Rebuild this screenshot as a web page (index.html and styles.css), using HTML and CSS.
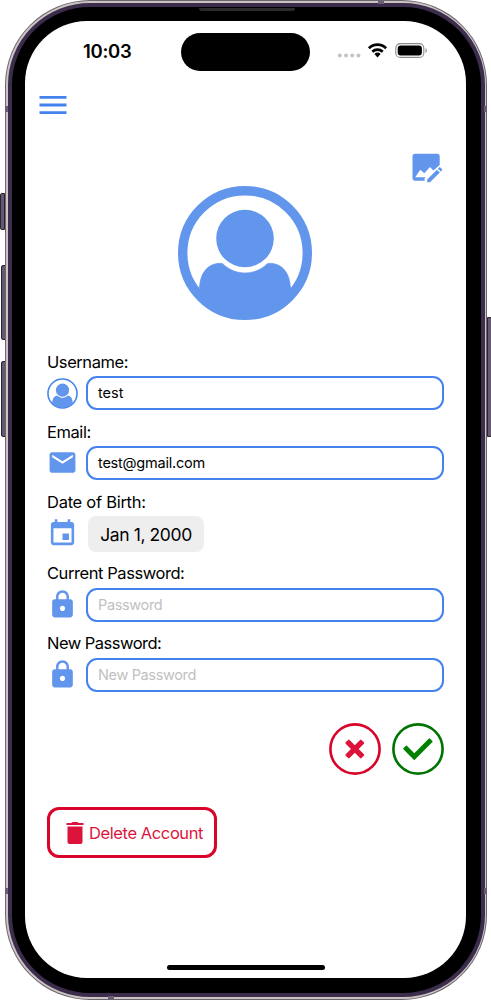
FILE: index.html
```html
<!DOCTYPE html>
<html lang="en">
<head>
<meta charset="utf-8">
<title>Profile</title>
<link rel="stylesheet" href="styles.css">
</head>
<body>
<svg class="defs" width="0" height="0">
  <symbol id="lock" viewBox="0 0 24 24"><path d="M18 8h-1V6c0-2.760-2.240-5-5-5S7 3.240 7 6v2H6c-1.100 0-2 .9-2 2v10c0 1.100.9 2 2 2h12c1.100 0 2-.9 2-2V10c0-1.100-.9-2-2-2zm-6 9c-1.100 0-2-.9-2-2s.9-2 2-2 2 .9 2 2-.9 2-2 2zm3.100-9H8.900V6c0-1.710 1.390-3.100 3.100-3.100s3.100 1.390 3.100 3.100v2z"/></symbol>
</svg>
<div class="device">
  <i class="key key-mute"></i><i class="key key-up"></i><i class="key key-down"></i><i class="key key-power"></i>
  <div class="rim"><div class="band"><div class="bezel">
    <i class="speaker"></i>
    <i class="seam seam-tl"></i><i class="seam seam-tr"></i><i class="seam seam-bl"></i><i class="seam seam-br"></i><i class="seam seam-top"></i><i class="seam seam-bottom"></i>
    <main class="screen">
      <header class="status">
        <span class="time">10:03</span>
        <span class="island"></span>
        <svg class="indicators" viewBox="0 0 92 18">
          <g fill="#c3c3c5"><circle cx="2.800" cy="13.600" r="2"/><circle cx="9" cy="13.600" r="2"/><circle cx="15.200" cy="13.600" r="2"/><circle cx="21.400" cy="13.600" r="2"/></g>
          <g fill="none" stroke="#000" stroke-width="2.700"><path d="M31.900 6.200a12.300 12.300 0 0 1 17.200 0"/><path d="M35.300 9.700a7.500 7.500 0 0 1 10.400 0"/></g>
          <path d="M37.400 12a4.500 4.500 0 0 1 6.200 0L40.500 15.500z"/>
          <rect x="58.800" y="1.600" width="28" height="13.800" rx="4.500" fill="none" stroke="#8b8b8b" stroke-width="1.100"/>
          <rect x="60.700" y="3.500" width="24.200" height="10" rx="2.900"/>
          <path d="M88.500 6.200c1.800.7 1.800 4 0 4.700z" fill="#8b8b8b"/>
        </svg>
      </header>
      <nav class="topbar">
        <svg class="menu" viewBox="0 0 24 24"><path d="M3 18h18v-1.900H3V18zm0-5.050h18v-1.900H3v1.900zM3 6v1.900h18V6H3z"/></svg>
      </nav>
      <div class="photo-row">
        <svg class="edit-photo" viewBox="0 0 31 31">
          <path d="M3.200.7h21.800q2.700 0 2.700 2.700v8.700L21.400 17.600 18 14 12.300 20.300 8.300 16.800 3.200 24.300h10.200l-.8 1.200v2.300H3.200Q.5 27.800.5 25.100V3.400Q.5.7 3.200.7z"/>
          <path d="M15.200 26.400 24.900 16.700l2.900 2.900-9.800 9.700h-2.800zM25.900 15.700l1.100-1.100q.7-.7 1.400 0l1.500 1.500q.7.700 0 1.400l-1.100 1.100z"/>
        </svg>
      </div>
      <svg class="avatar" viewBox="0 0 134 134">
        <circle cx="67" cy="67" r="62.300" fill="none" stroke="#6295ec" stroke-width="9.400"/>
        <circle cx="67" cy="52.500" r="28.800"/>
        <path d="M21.500 102C22 86 31 76 44.500 77.500C57 90 77 90 89.500 77.500C103 76 112 86 112.500 102A62 62 0 0 1 21.500 102z" stroke="#6295ec" stroke-width=".5"/>
        <path d="M21.500 100A59 59 0 0 0 112.500 100L112 112 67 131 22 112z"/>
      </svg>
      <form class="form">
        <div class="group">
          <label class="label">Username:</label>
          <div class="row">
            <svg class="icon icon-user" viewBox="0 0 32 32"><circle cx="16" cy="16" r="15" fill="none" stroke="#4482ee" stroke-width="1.600"/><circle cx="16" cy="12.600" r="6.800"/><path d="M5.300 26C5.500 20.500 8.200 18 11 18.400C14 21.200 18 21.200 21 18.400C23.800 18 26.500 20.500 26.700 26A14.700 14.700 0 0 1 5.300 26z"/></svg>
            <div class="input"><span class="v-test">test</span></div>
          </div>
        </div>
        <div class="group">
          <label class="label">Email:</label>
          <div class="row">
            <svg class="icon" viewBox="0 0 24 24"><path d="M20 4H4c-1.100 0-2 .9-2 2v12c0 1.100.9 2 2 2h16c1.100 0 2-.9 2-2V6c0-1.100-.9-2-2-2zm0 4l-8 5-8-5V6l8 5 8-5v2z"/></svg>
            <div class="input"><span>test@gmail.com</span></div>
          </div>
        </div>
        <div class="group">
          <label class="label l-date">Date of Birth:</label>
          <div class="row row-date">
            <svg class="icon" viewBox="0 0 24 24"><path d="M17 12h-5v5h5v-5zM16 1v2H8V1H6v2H5c-1.110 0-1.990.9-1.990 2L3 19c0 1.100.89 2 2 2h14c1.100 0 2-.9 2-2V5c0-1.100-.9-2-2-2h-1V1h-2zm3 18H5V8h14v11z"/></svg>
            <div class="date"><span>Jan 1, 2000</span></div>
          </div>
        </div>
        <div class="group">
          <label class="label l-cur">Current Password:</label>
          <div class="row">
            <svg class="icon"><use href="#lock"/></svg>
            <div class="input empty"><span>Password</span></div>
          </div>
        </div>
        <div class="group">
          <label class="label l-new">New Password:</label>
          <div class="row">
            <svg class="icon"><use href="#lock"/></svg>
            <div class="input empty"><span>New Password</span></div>
          </div>
        </div>
      </form>
      <div class="actions">
        <svg class="round" viewBox="0 0 52 52"><circle cx="26" cy="26" r="24.600" fill="none" stroke="#d90429" stroke-width="2.600"/><path d="M19.700 19.900 31.900 32.100M31.900 19.900 19.700 32.100" fill="none" stroke="#dc143c" stroke-width="4.500"/><path d="M19.800 17.600 25.800 23.600 31.800 17.600 34.200 20 28.200 26 34.200 32 31.800 34.400 25.800 28.400 19.800 34.400 17.400 32 23.400 26 17.400 20z" fill="#dc143c" stroke="#dc143c" stroke-width="2" stroke-linejoin="round"/></svg>
        <svg class="round" viewBox="0 0 52 52"><circle cx="26" cy="26" r="24.600" fill="none" stroke="#007400" stroke-width="2.600"/><path d="M14.400 23.300 22.300 31.200 37.400 16.100 39.900 18.600 22.300 36.200 11.900 25.800z" fill="#008000" stroke="#008000" stroke-width="1.400" stroke-linejoin="round"/></svg>
      </div>
      <button class="delete" type="button">
        <svg class="trash" viewBox="0 0 18 24"><path d="M1.500 5.500h15V21q0 2-2 2h-11q-2 0-2-2zM.5 2h5L6.500 1h5l1 1h5v2H.5z"/></svg>
        <span>Delete Account</span>
      </button>
      <div class="home"></div>
    </main>
  </div></div></div>
</div>
</body>
</html>
```
FILE: styles.css
```css
* { box-sizing: border-box; }
body { margin: 0; background: #fff; font-family: Inter, "Liberation Sans", sans-serif; color: #000; overflow: hidden; }
svg { display: block; flex: none; fill: #6295ec; }
.defs { position: absolute; }

.device { position: relative; width: 491px; height: 1000px; padding: 0 4px 0 5px; }
.rim { position: relative; height: 1000px; padding: 1px; border-radius: 85px; background: #6d6570; }
.band { height: 998px; padding: 2px 1.500px; border-radius: 84px; background: #cbc4c1; }
.bezel { position: relative; height: 994px; padding: 14px 14px 14px 13.500px; border: 4px solid #3b2d4b; border-radius: 82px; background: #000; }
.key { position: absolute; width: 5px; background: #655872; border: 1px solid #2b2430; border-radius: 2px 0 0 2px; }
.key-mute { left: 0; top: 193px; height: 37px; }
.key-up { left: 1px; top: 265px; height: 75px; }
.key-down { left: 1px; top: 361px; height: 76px; }
.key-power { left: 487px; top: 317px; height: 120px; border-radius: 0 2px 2px 0; }
.speaker { position: absolute; left: 187px; top: 1px; width: 96px; height: 3px; border-radius: 0 0 3px 3px; background: #2b2b2b; }
.seam { position: absolute; width: 3px; height: 6px; background: #6b5b74; }
.seam-tl { left: -6.500px; top: 99px; }
.seam-tr { right: -6.500px; top: 99px; }
.seam-bl { left: -6.500px; top: 881px; }
.seam-br { right: -6.500px; top: 881px; }
.seam-top { right: 97px; top: -6px; width: 6px; height: 3px; }
.seam-bottom { left: 96px; bottom: -6px; width: 6px; height: 3px; }

.screen { display: flex; flex-direction: column; width: 441px; height: 957px; border-radius: 62px; background: #fff; }

.status { display: flex; align-items: center; height: 61px; padding: 0 36px 0 58px; }
.time { width: 98px; padding-bottom: 2px; font-size: 18.500px; font-weight: 600; letter-spacing: -0.300px; white-space: nowrap; }
.island { width: 129px; height: 38px; border-radius: 19px; background: #000; }
.indicators { width: 92px; height: 18px; margin: -1px 0 0 27px; fill: #000; }

.topbar { height: 62px; padding: 4.500px 0 0 10.200px; }
.menu { width: 36px; height: 36px; fill: #4482ee; }
.photo-row { display: flex; justify-content: flex-end; height: 42px; padding: 9px 23px 0 0; }
.edit-photo { width: 31px; height: 31px; }
.avatar { width: 134px; height: 134px; margin: 0 0 0 153px; }

.form { padding: 30px 22px 0; }
.group { margin-bottom: 10px; }
.label { display: flex; align-items: center; height: 24px; margin-bottom: 2px; font-size: 16.500px; letter-spacing: -0.430px; white-space: nowrap; }
.l-date { letter-spacing: -0.270px; }
.l-cur, .l-new { padding-bottom: 2px; }
.l-new { letter-spacing: -0.520px; }
.row { display: flex; align-items: center; gap: 8px; height: 34px; }
.row-date { height: 36px; gap: 10px; }
.icon { width: 31px; height: 31px; margin-bottom: 1px; }
.icon-user { margin-bottom: 0; }
.input { display: flex; flex: 1; align-items: center; height: 34px; padding: 0 0 1px 10px; border: 2px solid #4482ee; border-radius: 11px; font-size: 14.500px; letter-spacing: -0.220px; white-space: nowrap; }
.v-test { letter-spacing: 0; }
.empty { color: #bfbfc1; letter-spacing: -0.350px; }
.date { display: flex; align-items: center; justify-content: center; width: 116px; height: 36px; border-radius: 8px; background: #eee; font-size: 17.500px; letter-spacing: -0.400px; white-space: nowrap; }

.actions { display: flex; justify-content: flex-end; gap: 11.500px; padding: 21px 22px 0 0; }
.round { width: 52px; height: 52px; }
.delete { display: flex; align-items: center; gap: 5px; width: 170px; height: 51px; margin: 32px 0 0 22px; padding: 0 0 0 16px; border: 3px solid #d90429; border-radius: 12px; background: #fff; color: #dc143c; font: 16.500px Inter, "Liberation Sans", sans-serif; letter-spacing: -0.400px; white-space: nowrap; }
.trash { width: 18px; height: 24px; fill: #dc143c; }
.home { width: 158px; height: 5px; margin: auto 0 8px 142px; border-radius: 3px; background: #000; }
```
